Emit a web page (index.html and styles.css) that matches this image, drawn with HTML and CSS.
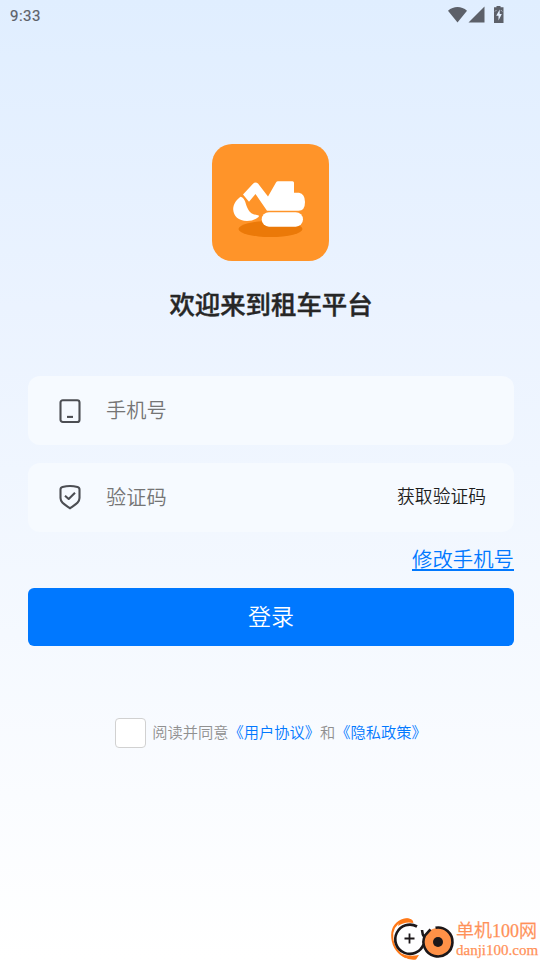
FILE: index.html
```html
<!DOCTYPE html>
<html lang="zh-CN">
<head>
<meta charset="utf-8">
<title>租车平台</title>
<link rel="stylesheet" href="styles.css">
</head>
<body>
<div class="screen">
  <header class="status">
    <span class="time">9:33</span>
    <svg class="status-icons" width="60" height="20" viewBox="0 0 60 20" fill="#5c6069">
      <path d="M0 4.700C5.600-.200 13.400-.200 19 4.700L9.500 16.500Z"/>
      <path d="M36.500 .500V16.500H20.500Z"/>
      <path d="M48.500 1.300V0H52.500V1.300H55.500V17H46V1.300Z"/>
      <path d="M51.700 3.500L48.200 9.800H50.500V14.500L53.800 8H51.700Z" fill="#e4f0ff"/>
      <path d="M47 5.500L48.500 4M52.800 4L54.300 5.500" stroke="#c3ccd8" stroke-width=".8"/>
    </svg>
  </header>
  <main class="login">
    <svg class="logo" width="117" height="117" viewBox="0 0 117 117">
      <rect width="117" height="117" rx="20" fill="#ff9429"/>
      <ellipse cx="58.500" cy="85" rx="32" ry="8" fill="#eb7908"/>
      <rect x="49.700" y="68.200" width="41.300" height="14.500" rx="7.250" fill="#fff"/>
      <path d="M31 50.500L41 39.700Q43.500 37.200 46 39.500L56 52.500L64 38.500Q64.700 37.300 66 37.300H80.500Q82 37.300 82 38.800V48.700H87Q93 50 93 58Q93 66.800 86.500 66.800H55L43.500 50L37 57.800Z" fill="#fff"/>
      <path d="M28.600 52.700C34 54.500 33 60 36.500 66Q39 70.500 46 71.200Q47.500 71.400 46.500 73Q42 77 35 77C26.500 77 21.500 72 21.200 65.500C21 60 25 55 28.600 52.700Z" fill="#fff"/>
    </svg>
    <h1 class="title">欢迎来到租车平台</h1>
    <div class="field">
      <svg class="field-icon" width="24" height="26" viewBox="0 0 24 26" fill="none" stroke="#4c4e53" stroke-width="2.100">
        <rect x="2.500" y="2.300" width="19" height="21.700" rx="2.300"/><path d="M9 18.900H15"/>
      </svg>
      <span class="placeholder">手机号</span>
    </div>
    <div class="field">
      <svg class="field-icon shield" width="24" height="26" viewBox="0 0 24 26" fill="none" stroke="#4c4e53" stroke-width="2.100" stroke-linejoin="round">
        <path d="M4.500 3Q12 1 19.500 3Q21.500 3.500 21.500 5.500V14C21.500 18.500 17.500 20.500 12 24.300C6.500 20.500 2.500 18.500 2.500 14V5.500Q2.500 3.500 4.500 3Z"/><path d="M7 11.800L10.700 15L17 8.700"/>
      </svg>
      <span class="placeholder">验证码</span>
      <span class="get-code">获取验证码</span>
    </div>
    <a class="change">修改手机号</a>
    <div class="submit">登录</div>
    <div class="agreement">
      <span class="checkbox"></span>
      <span class="terms">阅读并同意<a>《用户协议》</a>和<a>《隐私政策》</a></span>
    </div>
  </main>
  <div class="watermark">
    <svg width="70" height="50" viewBox="0 0 70 50">
      <circle cx="25" cy="28.700" r="14.700" fill="#fff"/>
      <path d="M27.500 12Q24 7.500 16.500 10.500C9.500 14 6.500 20 7.300 28C8 37 14 44.500 21 47.300" fill="none" stroke="#ff7918" stroke-width="2"/>
      <path d="M14 12Q22 6 27 10L28.500 13Q20 11 13 16Z" fill="#ff7918"/>
      <path d="M16 43.500Q24 47 34 45L31 49.500Q24 50.500 18 46.500Z" fill="#ff7918"/>
      <path d="M32 16.500A14.600 14.600 0 1 0 38.500 34.500" fill="none" stroke="#1c1719" stroke-width="2.600"/>
      <path d="M19.500 28.500H29.500M24.500 23.500V33.500" stroke="#1c1719" stroke-width="1.800"/>
      <circle cx="53" cy="32" r="14" fill="#ff9147"/>
      <path d="M50.500 17.700A14.500 14.500 0 1 1 40 25.500L45.500 19.300M37 20Q37.300 25 39.500 27.500" fill="none" stroke="#1c1719" stroke-width="2.600"/>
      <circle cx="53" cy="32" r="5" fill="#1c1719"/>
    </svg>
    <div class="mark">
      <span class="mark-name">单机100网</span>
      <span class="mark-url">danji100.com</span>
    </div>
  </div>
</div>
</body>
</html>
```
FILE: styles.css
```css
* { box-sizing: border-box; }
body { margin: 0; font-family: "Noto Sans CJK SC", sans-serif; font-weight: 350; }
.screen {
  position: relative;
  width: 540px;
  height: 960px;
  overflow: hidden;
  background: linear-gradient(#e0eeff 0%, #ebf3ff 32%, #f5f9ff 66%, #ffffff 100%);
}
.status {
  display: flex;
  justify-content: space-between;
  height: 32px;
  padding: 6px 32px 0 10px;
}
.time { font: 400 15px/20px Roboto, sans-serif; color: #5c6069; letter-spacing: .5px; -webkit-text-stroke: .2px #5c6069; }
.login {
  display: flex;
  flex-direction: column;
  align-items: center;
  padding: 112px 26px 0 28px;
}
.logo { display: block; margin-right: 1px; }
.title { margin: 23px 0 54px; font-size: 25.400px; line-height: 38px; font-weight: 500; color: #262626; -webkit-text-stroke: .4px #262626; }
.field {
  display: flex;
  align-items: center;
  width: 100%;
  height: 69px;
  margin-bottom: 18px;
  padding: 0 28px 0 30px;
  border-radius: 12px;
  background: #f6faff;
}
.field-icon { margin-right: 24px; }
.shield { margin-bottom: 2px; }
.placeholder { flex: 1; padding-bottom: 2px; font-size: 20.200px; line-height: 30px; color: #757575; }
.get-code { padding-bottom: 5px; font-size: 17.800px; line-height: 26px; color: #1e1e1e; }
.change {
  align-self: flex-end;
  height: 26px;
  margin-top: -5px;
  border-bottom: 2px solid #0078ff;
  font-size: 20.400px;
  line-height: 27px;
  color: #0078ff;
}
.submit {
  width: 100%;
  height: 58px;
  margin-top: 17px;
  border-radius: 6px;
  background: #0078ff;
  color: #fff;
  font-size: 23px;
  line-height: 55px;
  text-align: center;
}
.agreement { display: flex; align-items: center; gap: 6px; height: 30px; margin-top: 72px; }
.checkbox { width: 31px; height: 30px; border: 1px solid #d1d1d1; border-radius: 4px; background: #fff; }
.terms { padding-bottom: 4px; font-size: 15.250px; line-height: 24px; color: #909090; white-space: nowrap; }
.terms a { color: #0078ff; }
.watermark { position: absolute; right: 0; bottom: 0; display: flex; width: 155px; height: 50px; }
.mark {
  display: flex;
  flex-direction: column;
  width: 85px;
  padding: 10px 0 0 1px;
  color: #ff9158;
  -webkit-text-stroke: .25px #ff9158;
  white-space: nowrap;
}
.mark-name { font: 350 18px/22px "Liberation Serif", "Noto Sans CJK SC", serif; }
.mark-url { font: 15px/16px "Liberation Serif", serif; }
```
